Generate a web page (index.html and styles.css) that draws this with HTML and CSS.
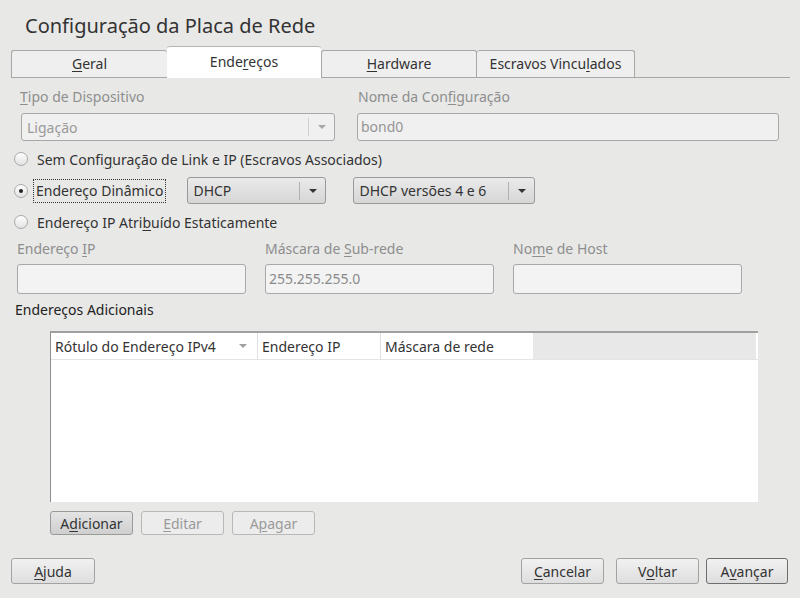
FILE: index.html
```html
<!DOCTYPE html>
<html lang="pt">
<head>
<meta charset="utf-8">
<title>Configuração da Placa de Rede</title>
<link rel="stylesheet" href="styles.css">
</head>
<body>
<div class="win">
  <h1 class="title">Configuração da Placa de Rede</h1>
  <div class="tabbar">
    <div class="tab t1"><span><u>G</u>eral</span></div>
    <div class="tab active"><span>Ende<u>r</u>eços</span></div>
    <div class="tab t3"><span><u>H</u>ardware</span></div>
    <div class="tab wide"><span>Escravos Vincu<u>l</u>ados</span></div>
    <div class="tabfill"></div>
  </div>

  <div class="row r1">
    <div class="col c-type">
      <div class="lbl dis"><u>T</u>ipo de Dispositivo</div>
      <div class="combo dis-combo">
        <span class="ctext">Ligação</span>
        <span class="carrow"><svg width="10" height="6" viewBox="0 0 10 6"><path d="M1 1h8L5 5z" fill="#a8a8a8"/></svg></span>
      </div>
    </div>
    <div class="col c-name">
      <div class="lbl dis">Nome da Con<u>f</u>iguração</div>
      <div class="field dis-field">bond0</div>
    </div>
  </div>

  <div class="radio r-a"><span class="rb"></span><span>Sem Confi<u>g</u>uração de Link e IP (Escravos Associados)</span></div>
  <div class="radio r-b">
    <span class="rb on"></span><span class="focus">Endereço Dinâmico</span>
    <div class="combo act c-dhcp"><span class="ctext">DHCP</span><span class="carrow"><svg width="10" height="6" viewBox="0 0 10 6"><path d="M1 1h8L5 5z" fill="#333"/></svg></span></div>
    <div class="combo act c-ver"><span class="ctext">DHCP versões 4 e 6</span><span class="carrow"><svg width="10" height="6" viewBox="0 0 10 6"><path d="M1 1h8L5 5z" fill="#333"/></svg></span></div>
  </div>
  <div class="radio r-c"><span class="rb"></span><span>Endereço IP Atri<u>b</u>uído Estaticamente</span></div>

  <div class="row r-ip">
    <div class="col c-ip">
      <div class="lbl dis">Endereço <u>I</u>P</div>
      <div class="field ip-field"></div>
    </div>
    <div class="col c-ip">
      <div class="lbl dis">Máscara de <u>S</u>ub-rede</div>
      <div class="field ip-field">255.255.255.0</div>
    </div>
    <div class="col c-ip">
      <div class="lbl dis">No<u>m</u>e de Host</div>
      <div class="field ip-field"></div>
    </div>
  </div>

  <div class="sect">Endereços Adicionais</div>
  <div class="table">
    <div class="thead">
      <div class="th th1">Rótulo do Endereço IPv4<svg class="sort" width="10" height="6" viewBox="0 0 10 6"><path d="M1 1h8L5 5z" fill="#a0a0a0"/></svg></div>
      <div class="th th2">Endereço IP</div>
      <div class="th th3">Máscara de rede</div>
      <div class="threst"></div>
    </div>
    <div class="tbody"></div>
  </div>
  <div class="tbtns">
    <div class="btn hot">A<u>d</u>icionar</div>
    <div class="btn off"><u>E</u>ditar</div>
    <div class="btn off">A<u>p</u>agar</div>
  </div>

  <div class="footer">
    <div class="btn fbtn help"><u>A</u>juda</div>
    <div class="spacer"></div>
    <div class="btn fbtn"><u>C</u>ancelar</div>
    <div class="btn fbtn back"><span>V<u>o</u>ltar</span></div>
    <div class="btn fbtn def">A<u>v</u>ançar</div>
  </div>
</div>
</body>
</html>
```
FILE: styles.css
```css
* { box-sizing: border-box; }
html, body { margin: 0; padding: 0; }
body {
  background: #e8e8e7;
  font-family: "Noto Sans", "Open Sans", sans-serif;
  font-size: 14px;
  color: #333;
  width: 800px;
  height: 598px;
  overflow: hidden;
}
u { text-decoration: underline; text-underline-offset: 2px; }
.win { display: flex; flex-direction: column; }
.title {
  margin: 0;
  font-weight: normal;
  font-size: 20px;
  line-height: 26px;
  padding: 13px 0 0 25px;
  height: 46px;
  color: #333;
}
.tabbar { display: flex; align-items: flex-end; height: 32px; padding-left: 11px; }
.tab {
  width: 156px; height: 28px;
  border: 1px solid #a7a7a7; border-bottom: none;
  border-radius: 3px 3px 0 0;
  background: #efefef;
  display: flex; align-items: center; justify-content: center;
  box-shadow: inset 0 -1px 0 #a7a7a7;
}
.tab span { position: relative; top: -1px; }
.tab.active {
  height: 32px; background: #fff; box-shadow: none; width: 154px;
  border-left: none; border-right: none;
  border-top: 1px solid #b5b5b5;
}
.tab.t1 { border-right: none; }
.tab.t3 { width: 156px; border-left: 1px solid #a7a7a7; }
.tab.wide { width: 158px; border-left: none; }
.tabfill { width: 155px; height: 1px; background: #a7a7a7; }

.row { display: flex; }
.col { display: flex; flex-direction: column; }
.lbl { line-height: 20px; height: 20px; }
.dis { color: #8e8e8e; }
.r1 { padding-top: 9px; padding-left: 20px; height: 65px; }
.c-type { width: 315px; }
.c-name { width: 421px; margin-left: 23px; }
.combo {
  display: flex; align-items: center; height: 28px;
  border: 1px solid #a8a8a8; border-radius: 3px;
}
.ctext { flex: 1; padding-left: 5px; }
.carrow {
  width: 26px; height: 18px;
  border-left: 1px solid #c4c4c4;
  display: flex; align-items: center; justify-content: center;
}
.dis-combo { margin-top: 6px; margin-left: 1px; background: #f0f0f0; color: #999; }
.dis-combo .carrow { border-left-color: #d0d0d0; }
.field {
  height: 28px; border: 1px solid #a8a8a8; border-radius: 3px;
  padding-left: 3px; line-height: 26px;
}
.dis-field { margin-top: 6px; margin-left: -1px; background: #f0f0f0; color: #959595; }

.radio { display: flex; align-items: center; padding-left: 14px; }
.rb {
  width: 14px; height: 14px; border-radius: 50%;
  border: 1px solid #a8a8a8;
  background: linear-gradient(#ffffff, #e2e2e2);
  margin-right: 9px; position: relative;
}
.rb.on::after {
  content: ""; position: absolute; left: 4px; top: 4px;
  width: 4px; height: 4px; border-radius: 50%; background: #222;
}
.r-a { height: 32px; }
.r-b { height: 31px; }
.r-b .rb { margin-right: 5px; }
.focus { border: 1px dotted #333; padding: 1px 2px 1px 2px; line-height: 20px; }
.combo.act {
  height: 27px; border-color: #9a9a9a;
  background: linear-gradient(#eaeaea, #d6d6d6);
}
.combo.act .carrow { border-left-color: #b0b0b0; }
.c-dhcp { width: 139px; margin-left: 21px; }
.c-ver { width: 182px; margin-left: 27px; }
.r-c { height: 32px; padding-top: 0; }

.r-ip { padding-left: 17px; padding-top: 1px; height: 72px; }
.c-ip { width: 229px; margin-right: 19px; }
.ip-field { margin-top: 5px; height: 30px; background: #f3f3f3; color: #8a8a8a; line-height: 28px; }

.sect { padding-left: 15px; height: 18px; line-height: 14px; color: #222; margin-top: -7px; }
.table {
  margin-left: 50px; width: 708px; height: 171px;
  border-top: 2px solid #a0a0a0; border-left: 1px solid #8f8f8f;
  background: #fff; margin-top: 10px;
  display: flex; flex-direction: column;
}
.thead { display: flex; height: 27px; border-bottom: 1px solid #e4e4e4; }
.th { display: flex; align-items: center; padding-left: 4px; border-right: 1px solid #e0e0e0; color: #333; }
.th1 { width: 207px; }
.sort { margin-left: auto; margin-right: 9px; }
.th2 { width: 123px; }
.th3 { width: 152px; border-right: none; }
.threst { flex: 1; background: #e8e8e8; margin-right: 2px; }
.tbody { flex: 1; }

.btn {
  height: 24px; border: 1px solid #a3a3a3; border-radius: 3px;
  background: linear-gradient(#f1f1f1, #dedede);
  display: flex; align-items: center; justify-content: center;
  color: #333;
}
.tbtns { display: flex; gap: 8px; padding-left: 50px; margin-top: 9px; }
.tbtns .btn { width: 83px; }
.btn.hot { background: linear-gradient(#e4e4e4, #cfcfcf); border-color: #9a9a9a; }
.btn.off { background: #ececec; border-color: #b8b8b8; color: #9a9a9a; }

.footer { display: flex; padding: 0 12px 0 11px; margin-top: 23px; }
.fbtn { width: 83px; height: 26px; }
.fbtn.help { width: 84px; }
.spacer { flex: 1; }
.fbtn.back { margin-left: 12px; }
.fbtn.def { border-color: #6e6e6e; margin-left: 7px; width: 82px; }
```
